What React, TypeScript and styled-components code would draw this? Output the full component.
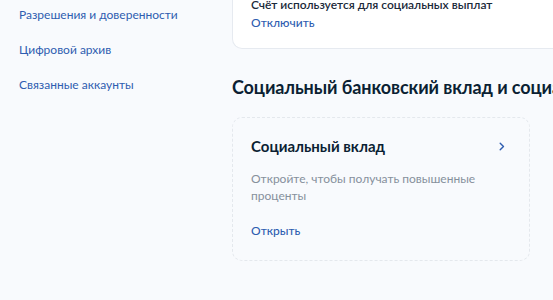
import React from "react";
import styled, { createGlobalStyle } from "styled-components";

const Global = createGlobalStyle`
  html, body { margin: 0; padding: 0; background: #f8fafd; }
  body { font-family: Lato, "Noto Sans", sans-serif; overflow: hidden; }
  * { box-sizing: border-box; }
`;

const Page = styled.div`
  display: flex;
  width: 553px;
  height: 300px;
  overflow: hidden;
  margin-top: -20px;
`;

const Sidebar = styled.nav`
  width: 232px;
  flex: none;
  display: flex;
  flex-direction: column;
  gap: 19px;
  padding: 27px 0 0 19px;
`;

const NavLink = styled.a`
  font-size: 12px;
  line-height: 16px;
  color: #2f5db0;
  text-decoration: none;
  white-space: nowrap;
`;

const Main = styled.main`
  flex: 1;
  min-width: 0;
  display: flex;
  flex-direction: column;
`;

const AccountCard = styled.section`
  width: 340px;
  background: #ffffff;
  border: 1px solid #e6eaf0;
  border-top: none;
  border-right: none;
  border-radius: 0 0 0 10px;
  padding: 17px 18px 17px 18px;
  display: flex;
  flex-direction: column;
  gap: 2px;
`;

const Note = styled.div`
  font-size: 12px;
  line-height: 16px;
  font-weight: 600;
  color: #1b2a3a;
  white-space: nowrap;
`;

const Link = styled.a`
  font-size: 12px;
  line-height: 16px;
  color: #2f5db0;
  font-weight: 500;
  text-decoration: none;
`;

const Heading = styled.h2`
  margin: 26px 0 0;
  font-size: 18px;
  line-height: 24px;
  font-weight: 700;
  color: #0b1f33;
  white-space: nowrap;
  letter-spacing: -0.1px;
`;

const DepositCard = styled.article`
  width: 298px;
  margin-top: 18px;
  border: 1px dashed #e4e8ed;
  border-radius: 10px;
  background: transparent;
  padding: 17px 18px 21px 18px;
  display: flex;
  flex-direction: column;
`;

const CardHead = styled.div`
  display: flex;
  align-items: center;
  justify-content: space-between;
  padding-right: 6px;
`;

const CardTitle = styled.h3`
  margin: 0;
  font-size: 15px;
  line-height: 22px;
  font-weight: 700;
  color: #0b1f33;
`;

const Desc = styled.p`
  margin: 13px 0 0;
  font-size: 12px;
  line-height: 17px;
  color: #86909c;
  padding-right: 30px;
`;

const Action = styled(Link)`
  margin-top: 19px;
`;

const Chevron = () => (
  <svg width="6" height="9" viewBox="0 0 6 9" fill="none">
    <path d="M1.2 1.2 L4.5 4.5 L1.2 7.8" stroke="#2f5db0" strokeWidth="1.4" strokeLinecap="round" strokeLinejoin="round" />
  </svg>
);

export default function App() {
  return (
    <>
      <Global />
      <Page>
        <Sidebar>
          <NavLink href="#">Разрешения и доверенности</NavLink>
          <NavLink href="#">Цифровой архив</NavLink>
          <NavLink href="#">Связанные аккаунты</NavLink>
        </Sidebar>
        <Main>
          <AccountCard>
            <Note>Счёт используется для социальных выплат</Note>
            <Link href="#">Отключить</Link>
          </AccountCard>
          <Heading>Социальный банковский вклад и социальные выплаты</Heading>
          <DepositCard>
            <CardHead>
              <CardTitle>Социальный вклад</CardTitle>
              <Chevron />
            </CardHead>
            <Desc>Откройте, чтобы получать повышенные проценты</Desc>
            <Action href="#">Открыть</Action>
          </DepositCard>
        </Main>
      </Page>
    </>
  );
}
